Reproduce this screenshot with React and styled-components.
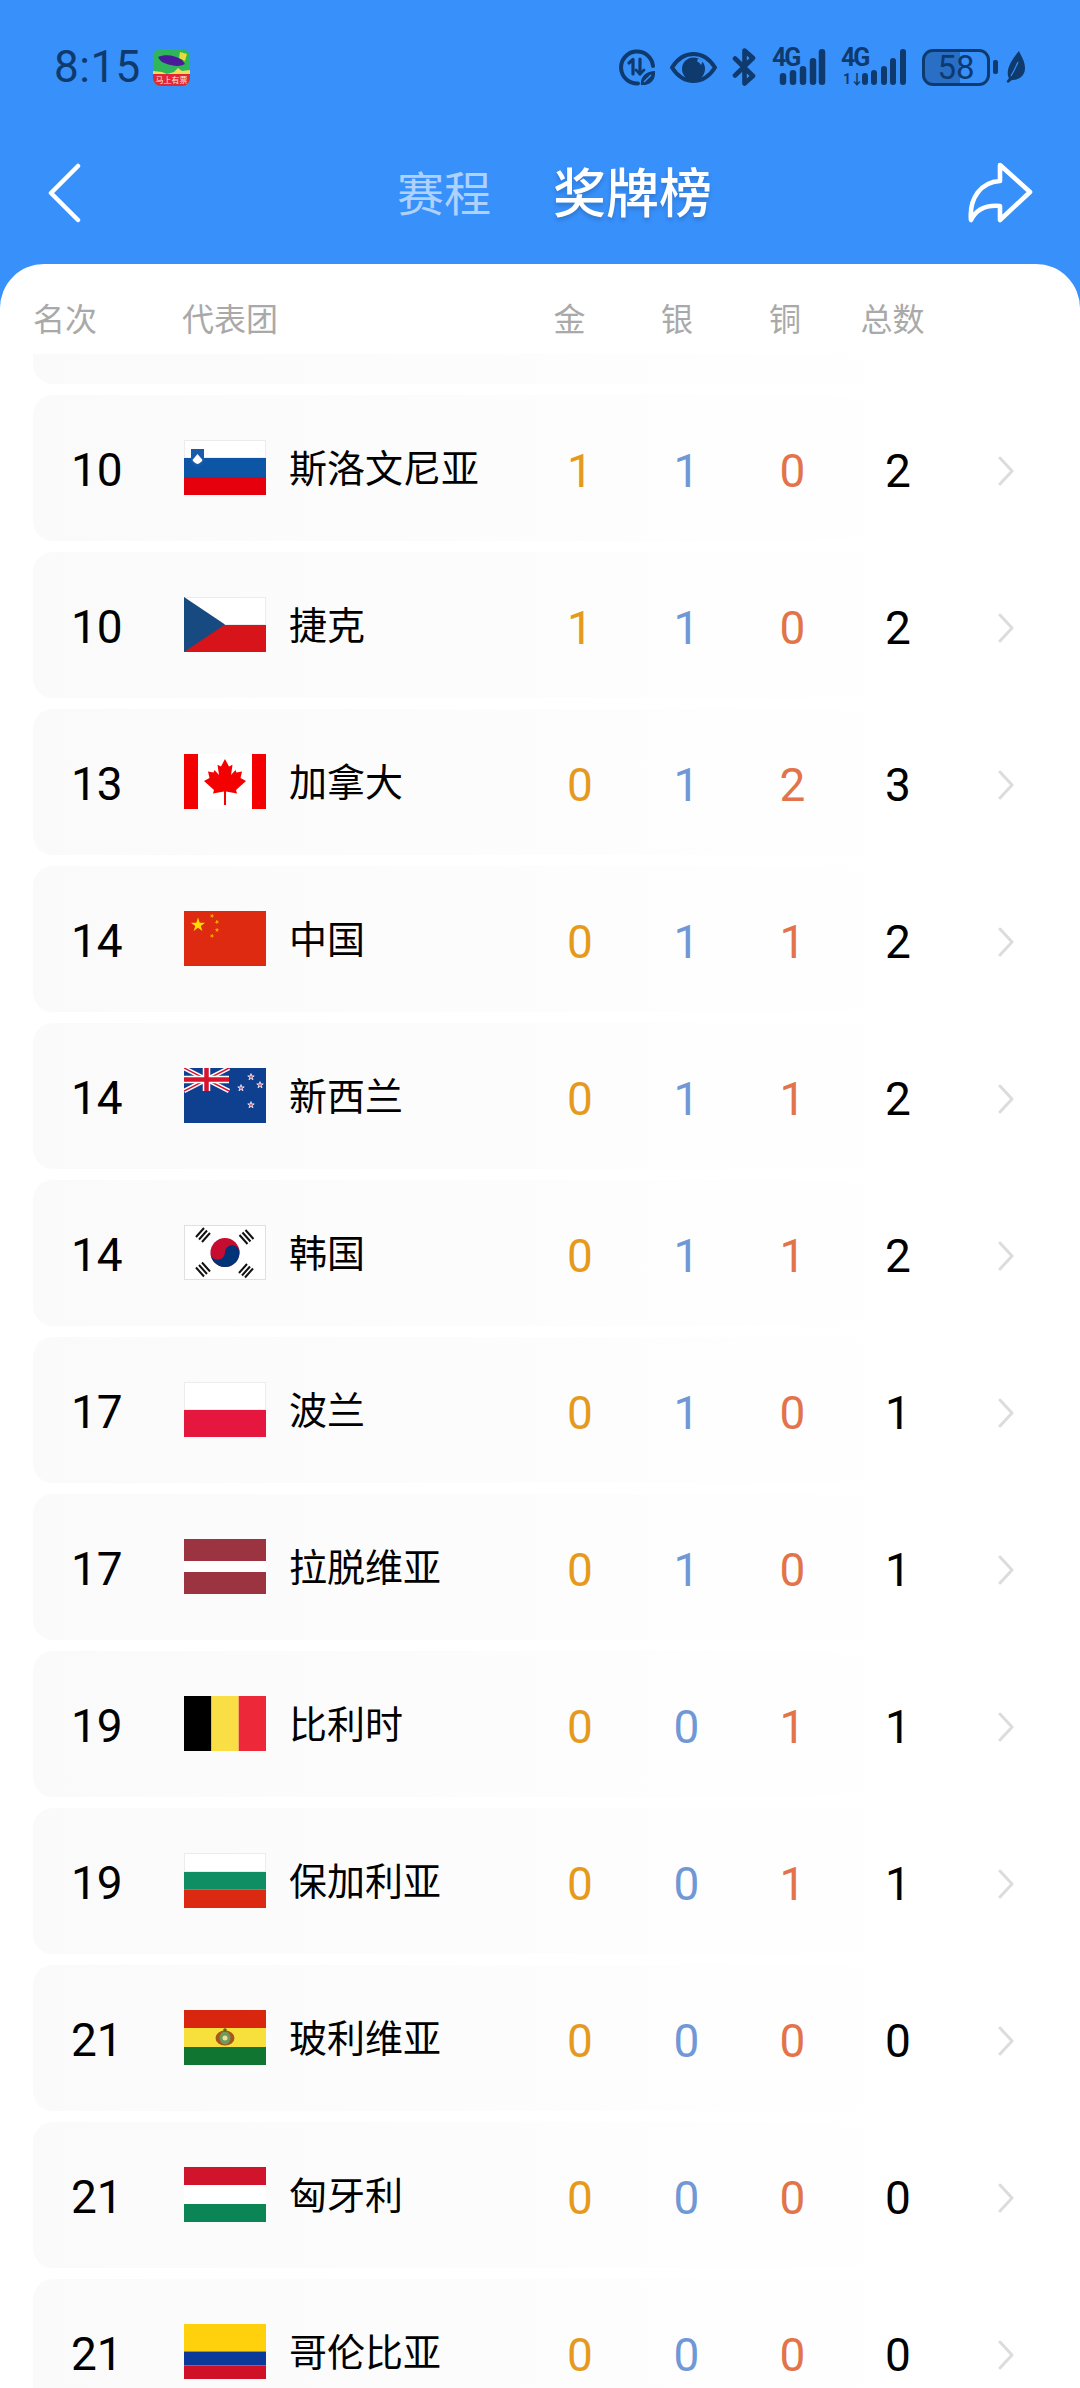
import React from "react";
import styled, { createGlobalStyle } from "styled-components";

const Global = createGlobalStyle`
  html, body { margin: 0; padding: 0; background: #3890fb; }
  * { box-sizing: border-box; }
`;

const FONT = `Roboto, "Noto Sans CJK SC", sans-serif`;
const INK = "#0e3a6e";
const BLUE = "#3890fb";

const Page = styled.div`
  width: 1080px;
  height: 2388px;
  overflow: hidden;
  display: flex;
  flex-direction: column;
  background: ${BLUE};
  font-family: ${FONT};
`;

const StatusBar = styled.div`
  height: 134px;
  flex: none;
  display: flex;
  align-items: center;
  padding: 0 55px 0 54px;
  color: ${INK};
`;
const Clock = styled.span`
  font-size: 44px;
  font-weight: 400;
  letter-spacing: 0.5px;
  margin-right: 12px;
`;
const StatusIcons = styled.div`
  margin-left: auto;
  display: flex;
  align-items: center;
  gap: 15px;
`;
const Net = styled.div`
  position: relative;
  width: ${(p) => p.$w}px;
  height: 38px;
`;
const NetLabel = styled.span`
  position: absolute;
  left: 0;
  top: -1px;
  font-size: 25px;
  line-height: 22px;
  font-weight: 700;
  letter-spacing: -2px;
  color: ${INK};
`;
const NetArrows = styled.span`
  position: absolute;
  left: 2px;
  bottom: 0;
  font-size: 14px;
  line-height: 14px;
  font-weight: 700;
  letter-spacing: -1px;
  color: ${INK};
`;
const NetBars = styled.svg`
  position: absolute;
  left: 0;
  top: 0;
`;
const Battery = styled.div`
  width: 68px;
  height: 37px;
  border: 3px solid ${INK};
  border-radius: 11px;
  display: flex;
  align-items: center;
  justify-content: center;
  font-size: 33px;
  font-weight: 400;
  color: ${INK};
  background: linear-gradient(to right, rgba(14, 58, 110, 0.38) 56%, transparent 56%);
`;
const BatteryNub = styled.div`
  width: 5px;
  height: 14px;
  border-radius: 2px;
  background: ${INK};
  margin-left: -12px;
`;
const LeafWrap = styled.div`
  display: flex;
  margin-left: -8px;
`;

const NavBar = styled.div`
  height: 130px;
  flex: none;
  display: flex;
  align-items: center;
  justify-content: space-between;
  padding: 0 47px 12px 46px;
`;
const Tabs = styled.div`
  display: flex;
  align-items: center;
  gap: 62px;
  margin-left: 60px;
  padding-top: 4px;
`;
const Tab = styled.span`
  font-size: ${(p) => (p.$active ? "53px" : "47px")};
  font-weight: ${(p) => (p.$active ? 500 : 400)};
  color: ${(p) => (p.$active ? "#fff" : "rgba(255,255,255,0.6)")};
  text-shadow: ${(p) => (p.$active ? "0 3px 4px rgba(0,0,0,0.18)" : "none")};
  line-height: 64px;
`;

const Sheet = styled.div`
  flex: 1;
  min-height: 0;
  background: #fff;
  border-radius: 44px 44px 0 0;
  display: flex;
  flex-direction: column;
`;

const ListHeader = styled.div`
  height: 90px;
  flex: none;
  display: grid;
  grid-template-columns: 149px 334px 107px 108px 108px 107px;
  align-items: center;
  margin: 0 33px;
  font-size: 32px;
  color: #a9a9a9;
  padding-top: 16px;
`;
const HeadCell = styled.span`
  text-align: ${(p) => (p.$center ? "center" : "left")};
`;

const List = styled.div`
  flex: 1;
  min-height: 0;
  overflow: hidden;
`;
const ListInner = styled.div`
  margin: -116px 33px 0;
  display: flex;
  flex-direction: column;
  gap: 11px;
`;
const Row = styled.div`
  height: 146px;
  flex: none;
  border-radius: 20px;
  background: linear-gradient(to right, #fafafa 0%, #fdfdfd 55%, #ffffff 90%);
  display: grid;
  grid-template-columns: 151px 105px 238px 106px 107px 105px 106px 1fr;
  align-items: center;
`;
const Rank = styled.span`
  font-size: 46px;
  color: #000;
  padding: 3px 0 0 38px;
`;
const FlagSvg = styled.svg`
  display: block;
  width: 82px;
  height: 55px;
  margin-bottom: 1px;
`;
const Name = styled.span`
  font-size: 38px;
  color: #000;
  white-space: nowrap;
  padding-bottom: 6px;
`;
const Count = styled.span`
  font-size: 46px;
  text-align: center;
  padding-top: 6px;
  color: ${(p) => p.$color};
`;
const Chevron = styled.svg`
  display: block;
  width: 16px;
  height: 30px;
  justify-self: center;
  margin: 5px 0 0 14px;
`;

const star = (cx, cy, r, rot = 0) => {
  const pts = [];
  for (let i = 0; i < 10; i++) {
    const rad = i % 2 ? r * 0.382 : r;
    const a = ((-90 + i * 36 + rot) * Math.PI) / 180;
    pts.push(`${(cx + rad * Math.cos(a)).toFixed(2)},${(cy + rad * Math.sin(a)).toFixed(2)}`);
  }
  return pts.join(" ");
};

const LEAF_RIGHT = [
  [41, 5], [45, 12.5], [48.5, 10.8], [47, 21], [51.5, 16], [52.5, 18.5], [58, 17.5],
  [56.5, 24], [62, 27], [52, 36], [53, 39.5], [42, 37.5], [42, 51],
];
const LEAF = [
  ...LEAF_RIGHT,
  ...LEAF_RIGHT.slice(1).reverse().map(([x, y]) => [82 - x, y]),
].map((p) => p.join(",")).join(" ");

const Stripes = ({ bands }) => {
  let y = 0;
  return bands.map(([h, c]) => {
    const el = <rect key={y} x="0" y={y} width="82" height={h} fill={c} />;
    y += h;
    return el;
  });
};

const TopEdge = ({ h }) => (
  <rect x="0.5" y="0.5" width="81" height={h} fill="none" stroke="#ececec" strokeWidth="1" />
);

const FLAGS = {
  si: (
    <>
      <Stripes bands={[[18, "#ffffff"], [19, "#0d56a6"], [18, "#e6000d"]]} />
      <TopEdge h={17} />
      <path d="M7 9h13v11c0 4-3 6-6.500 7C10 26 7 24 7 20z" fill="#1a5aa8" />
      <path d="M8.500 20l5-6 5 6c-1 2-3 3.500-5 4-2-.5-4-2-5-4z" fill="#fff" />
    </>
  ),
  cz: (
    <>
      <Stripes bands={[[27.5, "#ffffff"], [27.5, "#d7141a"]]} />
      <TopEdge h={27} />
      <path d="M0 0L41 27.500L0 55z" fill="#174a80" />
    </>
  ),
  ca: (
    <>
      <rect width="82" height="55" fill="#fff" />
      <rect width="14" height="55" fill="#f50000" />
      <rect x="68" width="14" height="55" fill="#f50000" />
      <polygon points={LEAF} fill="#f50000" />
    </>
  ),
  cn: (
    <>
      <rect width="82" height="55" fill="#de2a10" />
      <polygon points={star(14, 14, 7.5)} fill="#ffde00" />
      <polygon points={star(28, 5, 2.4, 20)} fill="#ffb400" />
      <polygon points={star(33, 11, 2.4, 45)} fill="#ffb400" />
      <polygon points={star(33, 19, 2.4, 0)} fill="#ffb400" />
      <polygon points={star(28, 25, 2.4, 20)} fill="#ffb400" />
    </>
  ),
  nz: (
    <>
      <rect width="82" height="55" fill="#0f3f8f" />
      <path d="M0 0L45 23M45 0L0 23" stroke="#fff" strokeWidth="4.500" />
      <path d="M0 0L45 23M45 0L0 23" stroke="#d8132e" strokeWidth="1.500" />
      <path d="M22.500 0V23M0 11.500H45" stroke="#fff" strokeWidth="7.500" />
      <path d="M22.500 0V23M0 11.500H45" stroke="#d8132e" strokeWidth="4.500" />
      {[[67, 9], [76, 17], [57, 20], [67, 37]].map(([x, y]) => (
        <polygon key={x + "-" + y} points={star(x, y, 3.4)} fill="#c0607a" stroke="#e8e8f4" strokeWidth="0.9" />
      ))}
    </>
  ),
  kr: (
    <>
      <rect width="82" height="55" fill="#fff" />
      <circle cx="41" cy="27.500" r="14.500" fill="#c60c30" />
      <path d="M26.500 27.500a7.250 7.250 0 0 0 14.500 0a7.250 7.250 0 0 1 14.500 0a14.500 14.500 0 0 1-29 0z" fill="#003478" />
      <g stroke="#111" strokeWidth="2">
        <path d="M13 12.500l8-9M16 15l8-9M19 17.500l8-9" transform="translate(-1 -.5)" />
        <path d="M59 8.500l8 9M56 11l8 9M62 6l8 9" transform="translate(-.5 -1)" />
        <path d="M13 43l8 9M16 40.500l8 9M10 45.500l8 9" transform="translate(2 -3)" />
        <path d="M60 50l8-9M63 52l8-9M57 47.500l8-9" transform="translate(-2 .5)" />
      </g>
      <rect x="0.5" y="0.5" width="81" height="54" fill="none" stroke="#e0e0e0" strokeWidth="1" />
    </>
  ),
  pl: (
    <>
      <Stripes bands={[[27.5, "#ffffff"], [27.5, "#e5173f"]]} />
      <TopEdge h={27} />
    </>
  ),
  lv: <Stripes bands={[[22, "#9b3340"], [11, "#ffffff"], [22, "#9b3340"]]} />,
  be: (
    <>
      <rect width="27.400" height="55" fill="#000" />
      <rect x="27.400" width="27.300" height="55" fill="#f9de45" />
      <rect x="54.700" width="27.300" height="55" fill="#ed2939" />
    </>
  ),
  bg: (
    <>
      <Stripes bands={[[18.3, "#ffffff"], [18.4, "#0f8e63"], [18.3, "#dc2a12"]]} />
      <TopEdge h={18} />
    </>
  ),
  bo: (
    <>
      <Stripes bands={[[18, "#d9260f"], [19, "#f7e03c"], [18, "#0f7530"]]} />
      <ellipse cx="41" cy="28" rx="9.500" ry="7.500" fill="#a8541a" />
      <ellipse cx="41" cy="28" rx="5.500" ry="6.500" fill="#6f9a5a" />
      <circle cx="41" cy="20" r="1.800" fill="#6f5a22" />
      <circle cx="41" cy="28" r="2.500" fill="#e8e0a0" />
    </>
  ),
  hu: <Stripes bands={[[18, "#cf142b"], [19, "#ffffff"], [18, "#0b8456"]]} />,
  co: <Stripes bands={[[27.5, "#ffd10c"], [14, "#0b3a9a"], [13.5, "#ce1126"]]} />,
};

const Flag = ({ code }) => (
  <FlagSvg viewBox="0 0 82 55" aria-hidden="true">
    {FLAGS[code]}
  </FlagSvg>
);

const ROWS = [
  ["10", "si", "斯洛文尼亚", 1, 1, 0, 2],
  ["10", "cz", "捷克", 1, 1, 0, 2],
  ["13", "ca", "加拿大", 0, 1, 2, 3],
  ["14", "cn", "中国", 0, 1, 1, 2],
  ["14", "nz", "新西兰", 0, 1, 1, 2],
  ["14", "kr", "韩国", 0, 1, 1, 2],
  ["17", "pl", "波兰", 0, 1, 0, 1],
  ["17", "lv", "拉脱维亚", 0, 1, 0, 1],
  ["19", "be", "比利时", 0, 0, 1, 1],
  ["19", "bg", "保加利亚", 0, 0, 1, 1],
  ["21", "bo", "玻利维亚", 0, 0, 0, 0],
  ["21", "hu", "匈牙利", 0, 0, 0, 0],
  ["21", "co", "哥伦比亚", 0, 0, 0, 0],
];

const AppIcon = () => (
  <svg width="37" height="37" viewBox="0 0 37 37">
    <defs>
      <clipPath id="appClip"><rect width="37" height="37" rx="8" /></clipPath>
    </defs>
    <g clipPath="url(#appClip)">
      <rect width="37" height="37" fill="#2fb55a" />
      <path d="M27 3l7 2-2 7-6-3z" fill="#e8dc3a" />
      <path d="M5 8c7-3 17-2 24 3l3 4c-5 3-12 2-18 0-4-1-7-3-9-7z" fill="#4a1a9a" />
      <path d="M0 22l9 1 5 2 7-2 4-4 4 3 8-1v8H0z" fill="#f2dc5a" />
      <rect y="25" width="37" height="12" fill="#e32636" />
      <text x="18.500" y="34" fontSize="8" fill="#fbe9d8" textAnchor="middle" fontFamily={FONT}>马上有票</text>
    </g>
  </svg>
);

const DataIcon = () => (
  <svg width="36" height="37" viewBox="0 0 36 37" fill="none">
    <path d="M19 34.500A16 16 0 1 1 34 17" stroke={INK} strokeWidth="4" strokeLinecap="round" />
    <path d="M10 14l4-3.500V25" stroke={INK} strokeWidth="3.200" strokeLinecap="round" strokeLinejoin="round" />
    <path d="M21 10v15" stroke={INK} strokeWidth="3.200" strokeLinecap="round" />
    <path d="M17 21l4 4 4-4" stroke={INK} strokeWidth="2.800" strokeLinecap="round" strokeLinejoin="round" />
    <path d="M22 36c-1-8 5-14 14-14 1 9-5 15-14 14z" fill={INK} />
    <path d="M25 33l7-7" stroke={BLUE} strokeWidth="1.500" />
  </svg>
);

const EyeIcon = () => (
  <svg width="47" height="31" viewBox="0 0 47 31" fill="none">
    <path d="M2 15.500C8 6 15 2 23.500 2S39 6 45 15.500C39 25 32 29 23.500 29S8 25 2 15.500z" stroke={INK} strokeWidth="4" strokeLinejoin="round" />
    <circle cx="23.500" cy="17" r="11.500" fill={INK} />
    <path d="M19 11.500C24 13.500 27 11 28 6.500L33 9 30 15 23 16z" fill={BLUE} />
    <circle cx="23.500" cy="17" r="8.500" fill={INK} />
  </svg>
);

const BluetoothIcon = () => (
  <svg width="25" height="38" viewBox="0 0 25 38" fill="none">
    <path d="M3 10.500l18 17.500-8.500 7.500V2.500L21 10 3 27.500" stroke={INK} strokeWidth="4.600" strokeLinejoin="round" strokeLinecap="round" />
  </svg>
);

const BAR_TOPS = [25, 22, 18, 10, 1];
const Bars = ({ xs, w }) => (
  <NetBars width="70" height="38" viewBox="0 0 70 38" aria-hidden="true">
    {xs.map((x, i) => (
      <rect key={x} x={x - w / 2} y={BAR_TOPS[i]} width={w} height={37 - BAR_TOPS[i]} rx={w / 2} fill={INK} />
    ))}
  </NetBars>
);

const LeafIcon = () => (
  <svg width="20" height="32" viewBox="0 0 20 32">
    <path d="M14 0C16 5 20 10 20 17 20 24 15 29 7 29L3 32 1.500 30.500 4 27C0 20 6 9 14 0z" fill={INK} />
    <path d="M6 25C9 20 11 16 13 11" stroke={BLUE} strokeWidth="1.200" fill="none" />
  </svg>
);

const BackIcon = () => (
  <svg width="36" height="60" viewBox="0 0 36 60" fill="none">
    <path d="M32 3L5 30l27 27" stroke="#fff" strokeWidth="4.500" strokeLinecap="round" strokeLinejoin="round" />
  </svg>
);

const ShareIcon = () => (
  <svg width="66" height="66" viewBox="0 0 66 66" fill="none">
    <path
      d="M33 5L63 32 33 60V46C22 45 10 48 4 60 2 38 14 22 33 21z"
      stroke="#fff"
      strokeWidth="4.600"
      strokeLinejoin="round"
    />
  </svg>
);

const ChevronIcon = () => (
  <Chevron viewBox="0 0 16 30" fill="none">
    <path d="M2 2l12 13L2 28" stroke="#dcdcdc" strokeWidth="3" strokeLinecap="round" strokeLinejoin="round" />
  </Chevron>
);

export default function App() {
  return (
    <Page>
      <Global />
      <StatusBar>
        <Clock>8:15</Clock>
        <AppIcon />
        <StatusIcons>
          <DataIcon />
          <EyeIcon />
          <BluetoothIcon />
          <Net $w={54}>
            <NetLabel>4G</NetLabel>
            <Bars xs={[11, 21, 31, 41, 50]} w={6.5} />
          </Net>
          <Net $w={66}>
            <NetLabel>4G</NetLabel>
            <NetArrows>1↓</NetArrows>
            <Bars xs={[24, 33, 43, 52, 62]} w={6} />
          </Net>
          <Battery>58</Battery>
          <BatteryNub />
          <LeafWrap>
            <LeafIcon />
          </LeafWrap>
        </StatusIcons>
      </StatusBar>
      <NavBar>
        <BackIcon />
        <Tabs>
          <Tab>赛程</Tab>
          <Tab $active>奖牌榜</Tab>
        </Tabs>
        <ShareIcon />
      </NavBar>
      <Sheet>
        <ListHeader>
          <HeadCell>名次</HeadCell>
          <HeadCell>代表团</HeadCell>
          <HeadCell $center>金</HeadCell>
          <HeadCell $center>银</HeadCell>
          <HeadCell $center>铜</HeadCell>
          <HeadCell $center>总数</HeadCell>
        </ListHeader>
        <List>
          <ListInner>
            <Row />
            {ROWS.map(([rank, code, name, g, s, b, t]) => (
              <Row key={code}>
                <Rank>{rank}</Rank>
                <Flag code={code} />
                <Name>{name}</Name>
                <Count $color="#e59a1c">{g}</Count>
                <Count $color="#7097d6">{s}</Count>
                <Count $color="#e2734a">{b}</Count>
                <Count $color="#000">{t}</Count>
                <ChevronIcon />
              </Row>
            ))}
          </ListInner>
        </List>
      </Sheet>
    </Page>
  );
}
